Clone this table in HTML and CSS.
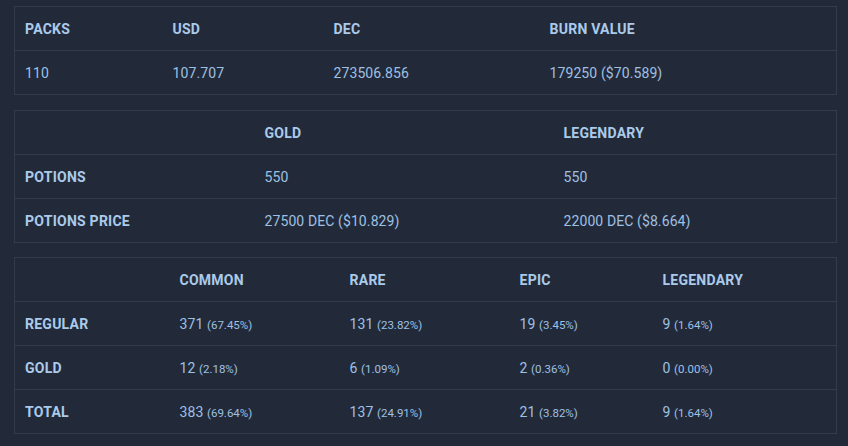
FILE: index.html
```html
<!DOCTYPE html>
<html lang="en">
<head>
    <meta charset="UTF-8">
    <meta name="viewport" content="width=device-width, initial-scale=1.0">
    <title>Pack Stats</title>
    <link rel="stylesheet" href="styles.css">
</head>
<body>

<div class="wrap">
    <table class="stats t-summary">
        <colgroup>
            <col style="width:148px"><col style="width:161px"><col style="width:216px"><col>
        </colgroup>
        <tr>
            <th>PACKS</th><th>USD</th><th>DEC</th><th>BURN VALUE</th>
        </tr>
        <tr>
            <td>110</td><td>107.707</td><td>273506.856</td><td>179250 ($70.589)</td>
        </tr>
    </table>

    <table class="stats t-potions">
        <colgroup>
            <col style="width:240px"><col style="width:299px"><col>
        </colgroup>
        <tr>
            <th></th><th>GOLD</th><th>LEGENDARY</th>
        </tr>
        <tr>
            <th>POTIONS</th><td>550</td><td>550</td>
        </tr>
        <tr>
            <th>POTIONS PRICE</th><td>27500 DEC ($10.829)</td><td>22000 DEC ($8.664)</td>
        </tr>
    </table>

    <table class="stats t-rarity">
        <colgroup>
            <col style="width:155px"><col style="width:170px"><col style="width:170px"><col style="width:143px"><col>
        </colgroup>
        <tr>
            <th></th><th>COMMON</th><th>RARE</th><th>EPIC</th><th>LEGENDARY</th>
        </tr>
        <tr>
            <th>REGULAR</th>
            <td>371 <small>(67.45%)</small></td>
            <td>131 <small>(23.82%)</small></td>
            <td>19 <small>(3.45%)</small></td>
            <td>9 <small>(1.64%)</small></td>
        </tr>
        <tr>
            <th>GOLD</th>
            <td>12 <small>(2.18%)</small></td>
            <td>6 <small>(1.09%)</small></td>
            <td>2 <small>(0.36%)</small></td>
            <td>0 <small>(0.00%)</small></td>
        </tr>
        <tr>
            <th>TOTAL</th>
            <td>383 <small>(69.64%)</small></td>
            <td>137 <small>(24.91%)</small></td>
            <td>21 <small>(3.82%)</small></td>
            <td>9 <small>(1.64%)</small></td>
        </tr>
    </table>
</div>

</body>
</html>
```

FILE: styles.css
```css
body {
    font-family: Roboto, "Liberation Sans", Arial, sans-serif;
    margin: 0;
    padding: 0;
    background-color: #222a3a;
    color: #a3c3e4;
}
.wrap {
    padding: 6px 11px 0 14px;
}
.stats {
    width: 823px;
    border-collapse: collapse;
    table-layout: fixed;
    border: 1px solid #323c4d;
    margin-bottom: 15px;
}
.stats th,
.stats td {
    height: 43px;
    padding: 0 10px;
    text-align: left;
    vertical-align: middle;
    font-size: 14px;
    border-top: 1px solid #323c4d;
    white-space: nowrap;
}
.stats tr:first-child th,
.stats tr:first-child td {
    border-top: none;
}
.stats th {
    font-weight: bold;
    color: #abcaea;
    letter-spacing: 0.25px;
}
.stats td {
    font-weight: normal;
    color: #9fc0e2;
    letter-spacing: 0.1px;
}
.stats small {
    font-size: 11.5px;
    letter-spacing: 0;
}
.t-potions {
    margin-bottom: 14px;
}
```
